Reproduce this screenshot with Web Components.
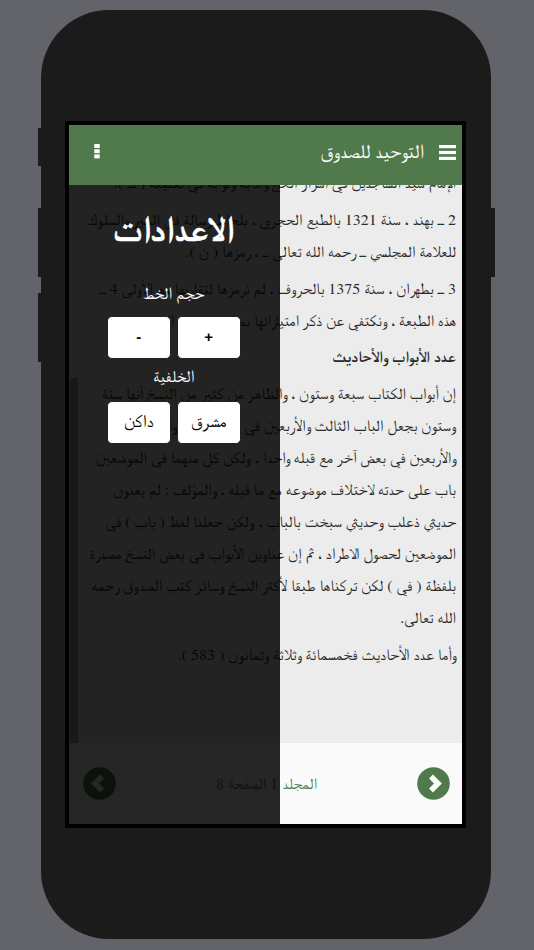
<!DOCTYPE html>
<html lang="ar">
<head>
<meta charset="utf-8">
<title>التوحيد للصدوق</title>
<style>
  html, body { margin: 0; height: 100%; background: #636469; overflow: hidden; }
  body { font-family: FreeSerif, "Noto Naskh Arabic", serif; }
</style>
</head>
<body>
<phone-shell>
  <app-header slot="header" title="التوحيد للصدوق"></app-header>
  <book-page slot="page"></book-page>
  <page-footer slot="footer" label="المجلد 1 الصفحة 8"></page-footer>
  <settings-drawer slot="drawer"></settings-drawer>
</phone-shell>

<script>
class PhoneShell extends HTMLElement {
    constructor() {
        super();
        this.attachShadow({ mode: 'open' })

        this.shadowRoot.innerHTML = `
        <style>
            :host {
                display: flex;
                height: 950px;
                padding: 10px 43px 11px 41px;
                box-sizing: border-box;
            }

            #body {
                position: relative;
                flex: 1;
                min-width: 0;
                background: #1b1b1c;
                border-radius: 68px;
                display: flex;
                padding: 111px 25px 111px 24px;
                box-sizing: border-box;
            }

            .side {
                position: absolute;
                background: #1b1b1c;
            }

            #screen {
                position: relative;
                flex: 1;
                min-width: 0;
                border: 4px solid #000;
                display: flex;
                flex-direction: column;
                overflow: hidden;
                background: #ececec;
            }

            #main {
                position: relative;
                flex: 1;
                min-height: 0;
                overflow: hidden;
            }

            /* scrollbar thumb, sits on the left because the page is rtl */
            #thumb {
                position: absolute;
                left: 1px;
                top: 193px;
                bottom: 0;
                width: 8px;
                background: rgba(0, 0, 0, 0.3);
            }
        </style>

        <div id="body">
            <div class="side" style="left:-3px;width:3px;top:118px;height:38px"></div>
            <div class="side" style="left:-3px;width:3px;top:198px;height:69px"></div>
            <div class="side" style="left:-3px;width:3px;top:283px;height:69px"></div>
            <div class="side" style="right:-4px;width:4px;top:198px;height:69px"></div>
            <div id="screen">
                <slot name="header"></slot>
                <div id="main">
                    <slot name="page"></slot>
                    <div id="thumb"></div>
                </div>
                <slot name="footer"></slot>
                <slot name="drawer"></slot>
            </div>
        </div>
        `
    }
}

class AppHeader extends HTMLElement {
    constructor() {
        super();
        this.attachShadow({ mode: 'open' })

        this.shadowRoot.innerHTML = `
        <style>
            :host {
                display: flex;
                flex: none;
                height: 60px;
                background: #517a4c;
                color: #fff;
                direction: rtl;
                align-items: center;
                padding: 0 6px 0 25px;
                position: relative;
                z-index: 2;
            }

            h1 {
                margin: 0 15px 6px auto;
                margin-inline: 15px auto;
                font: 400 20px FreeSerif, "Noto Naskh Arabic", serif;
            }

            svg { display: block; fill: #fff; flex: none; }
            #bars { align-self: flex-start; margin-top: 20px; }
            #more { align-self: flex-start; margin-top: 19px; }
        </style>

        <svg id="bars" width="17" height="15" viewBox="0 0 17 15">
            <rect x="0" y="0" width="17" height="3.2"/>
            <rect x="0" y="5.9" width="17" height="3.2"/>
            <rect x="0" y="11.8" width="17" height="3.2"/>
        </svg>
        <h1>${this.getAttribute('title')}</h1>
        <svg id="more" width="6" height="15" viewBox="0 0 6 15">
            <rect x="0.3" y="0" width="5.4" height="4"/>
            <rect x="0.3" y="5.2" width="5.4" height="4"/>
            <rect x="0.3" y="10.4" width="5.4" height="4"/>
        </svg>
        `
    }
}

class BookPage extends HTMLElement {
    constructor() {
        super();
        this.attachShadow({ mode: 'open' })

        const paragraphs = [
            ['الإمام سيد الساجدين في أسرار الحج وآدابه وثوابه في تكليفه ( ك ).'],
            ['2 ــ بهند ، سنة 1321 بالطبع الحجري ، بلحاظ رسالة في السير والسلوك', 'للعلامة المجلسي ــ رحمه الله تعالى ــ ، رمزها ( ن ).'],
            ['3 ــ بطهران ، سنة 1375 بالحروف ، لم نرمزها لتقاربها مع الأولى 4 ــ', 'هذه الطبعة ، ونكتفي عن ذكر امتيازاتها بما ذكرناه في المقدمة'],
            ['<b>عدد الأبواب والأحاديث</b>'],
            ['إن أبواب الكتاب سبعة وستون ، والظاهر من كثير من النسخ أنها ستة',
             'وستون بجعل الباب الثالث والأربعين في بعض النسخ والرابع',
             'والأربعين في بعض آخر مع قبله واحدا ، ولكن كل منهما في الموضعين',
             'باب على حدته لاختلاف موضوعه مع ما قبله ، والمؤلف : لم يعنون',
             'حديثي ذعلب وحديثي سبخت بالباب ، ولكن جعلنا لفظ ( باب ) في',
             'الموضعين لحصول الاطراد ، ثم إن عناوين الأبواب في بعض النسخ مصدرة',
             'بلفظة ( في ) لكن تركناها طبقا لأكثر النسخ وسائر كتب الصدوق رحمه',
             'الله تعالى.'],
            ['وأما عدد الأحاديث فخمسمائة وثلاثة وثمانون ( 583 ).']
        ]

        this.shadowRoot.innerHTML = `
        <style>
            :host {
                display: block;
                direction: rtl;
                color: #2a2a2a;
                font: 16px/32px FreeSerif, "Noto Naskh Arabic", serif;
                padding: 0 6px 0 15px;
                margin-top: -18px;
            }

            p { margin: 0 0 4.8px; }
            span { display: block; white-space: nowrap; }
        </style>
        ${paragraphs.map(lines => `<p>${lines.map(l => `<span>${l}</span>`).join('')}</p>`).join('')}
        `
    }
}

class PageFooter extends HTMLElement {
    constructor() {
        super();
        this.attachShadow({ mode: 'open' })

        const chevron = (d) => `
            <svg width="33" height="33" viewBox="0 0 33 33">
                <circle cx="16.5" cy="16.5" r="16.3" fill="#517a4c"/>
                <path d="${d}" fill="none" stroke="#fff" stroke-width="5.5"/>
            </svg>`

        this.shadowRoot.innerHTML = `
        <style>
            :host {
                display: flex;
                flex: none;
                height: 81px;
                background: #fafafa;
                align-items: center;
                justify-content: space-between;
                padding: 0 12px 0 14px;
                direction: ltr;
            }

            span {
                color: #517a4c;
                direction: rtl;
                font: 16px FreeSerif, "Noto Naskh Arabic", serif;
                padding-top: 1px;
            }

            svg { display: block; }
        </style>
        ${chevron('M19 9.5 L12 16.5 L19 23.5')}
        <span>${this.getAttribute('label')}</span>
        ${chevron('M14 9.5 L21 16.5 L14 23.5')}
        `
    }
}

class SettingsDrawer extends HTMLElement {
    constructor() {
        super();
        this.attachShadow({ mode: 'open' })

        this.shadowRoot.innerHTML = `
        <style>
            :host {
                position: absolute;
                top: 60px;
                bottom: 0;
                left: 0;
                width: 211px;
                background: rgba(0, 0, 0, 0.85);
                color: #fff;
                direction: rtl;
                display: flex;
                flex-direction: column;
                align-items: center;
                padding: 23px 1.5px 0 0;
                box-sizing: border-box;
                z-index: 1;
                font-family: FreeSerif, "Noto Naskh Arabic", serif;
            }

            h2 {
                margin: 0 0 30px;
                font-size: 35.5px;
                line-height: 46px;
                font-weight: 700;
                -webkit-text-stroke: 0.5px #fff;
            }

            p { margin: 0; font-size: 17px; line-height: 20px; }
            p.second { margin-bottom: 2px; }
            .row { display: flex; gap: 6px; margin: 12px 0 8px; }

            button {
                width: 64px;
                height: 43px;
                background: #fff;
                border: 1px solid #222;
                border-radius: 5px;
                color: #000;
                font: 18px FreeSerif, "Noto Naskh Arabic", serif;
                padding: 0 0 2px;
            }

            button.sign { font: 700 15px "Liberation Sans", sans-serif; }
        </style>

        <h2>الاعدادات</h2>
        <p>حجم الخط</p>
        <div class="row"><button class="sign">+</button><button class="sign">-</button></div>
        <p class="second">الخلفية</p>
        <div class="row"><button>مشرق</button><button>داكن</button></div>
        `
    }
}

customElements.define('phone-shell', PhoneShell)
customElements.define('app-header', AppHeader)
customElements.define('book-page', BookPage)
customElements.define('page-footer', PageFooter)
customElements.define('settings-drawer', SettingsDrawer)
</script>
</body>
</html>
